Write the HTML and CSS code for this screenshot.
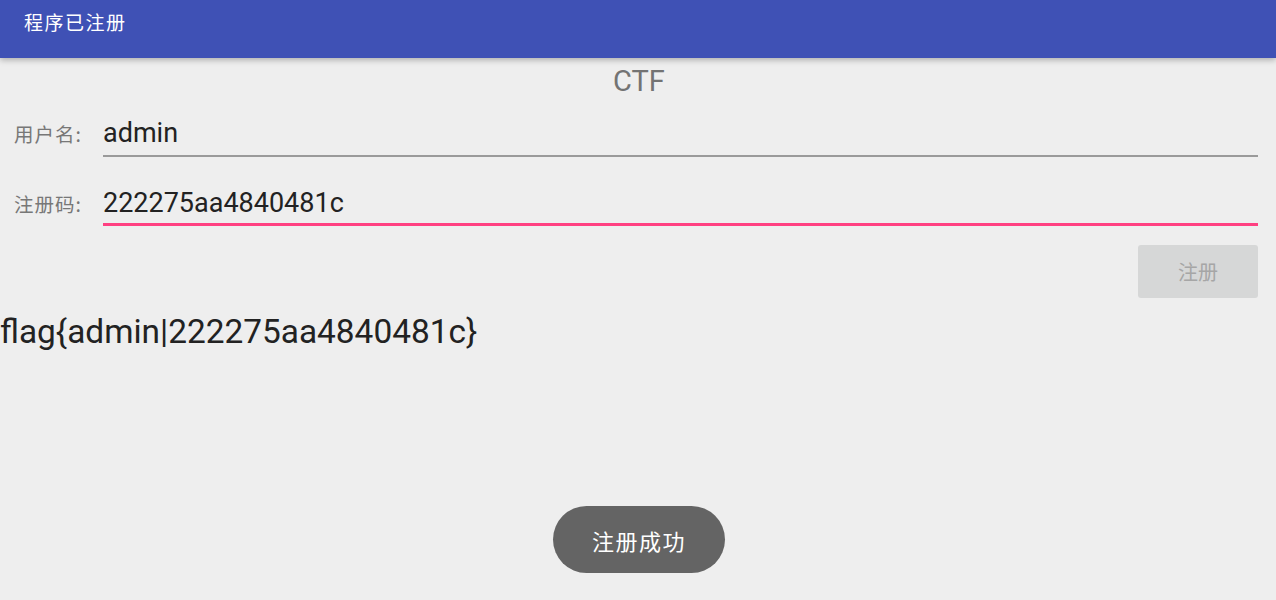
FILE: index.html
```html
<!DOCTYPE html>
<html lang="zh">
<head>
<meta charset="utf-8">
<title>程序已注册</title>
<link rel="stylesheet" href="styles.css">
</head>
<body>
<header class="appbar">
  <h1 class="appbar-title">程序已注册</h1>
</header>
<main class="content">
  <div class="heading">CTF</div>
  <div class="field field-user">
    <span class="field-label">用户名:</span>
    <div class="field-input">admin</div>
  </div>
  <div class="field field-code">
    <span class="field-label">注册码:</span>
    <div class="field-input focused">222275aa4840481c</div>
  </div>
  <div class="actions">
    <button class="btn-register" disabled>注册</button>
  </div>
  <div class="flag">flag{admin|222275aa4840481c}</div>
</main>
<div class="toast">注册成功</div>
</body>
</html>
```

FILE: styles.css
```css
html, body {
  margin: 0;
  padding: 0;
}
body {
  background: #eeeeee;
  font-family: Roboto, "Noto Sans CJK SC", sans-serif;
  width: 1276px;
  height: 600px;
  overflow: hidden;
  position: relative;
}
.appbar {
  height: 58px;
  background: #3f51b5;
  box-shadow: 0 2px 6px rgba(0, 0, 0, 0.28);
  padding: 10px 0 0 24px;
  box-sizing: border-box;
  position: relative;
  z-index: 1;
}
.appbar-title {
  margin: 0;
  font-family: "Noto Sans CJK SC", sans-serif;
  font-weight: 400;
  font-size: 19px;
  line-height: 24px;
  color: #ffffff;
  letter-spacing: 1.5px;
}
.content {
  display: flex;
  flex-direction: column;
}
.heading {
  margin-top: 6px;
  text-align: center;
  font-size: 29px;
  line-height: 34px;
  color: #737373;
  padding-left: 2px;
}
.field {
  display: flex;
  align-items: baseline;
  padding: 0 18px 0 14px;
}
.field-user {
  margin-top: 19px;
}
.field-code {
  margin-top: 30px;
}
.field-label {
  width: 89px;
  flex: none;
  font-family: "Noto Sans CJK SC", sans-serif;
  font-size: 19.5px;
  letter-spacing: 1px;
  color: #777777;
}
.field-input {
  flex: 1;
  font-family: Roboto, sans-serif;
  font-size: 27px;
  line-height: 32px;
  color: #222222;
  padding-bottom: 6px;
  border-bottom: 2px solid #9a9a9a;
}
.field-input.focused {
  padding-bottom: 4px;
  border-bottom: 3px solid #ff4081;
}
.actions {
  display: flex;
  justify-content: flex-end;
  padding-right: 18px;
  margin-top: 19px;
}
.btn-register {
  width: 120px;
  height: 53px;
  border: none;
  border-radius: 3px;
  background: #d6d7d7;
  color: #a6a6a6;
  font-family: "Noto Sans CJK SC", sans-serif;
  font-size: 20px;
  padding: 0;
}
.flag {
  margin-top: 14px;
  font-family: Roboto, sans-serif;
  font-size: 33.4px;
  line-height: 39px;
  color: #222222;
}
.toast {
  position: absolute;
  left: 553px;
  top: 506px;
  width: 172px;
  height: 67px;
  border-radius: 34px;
  background: #646464;
  color: #ffffff;
  font-family: "Noto Sans CJK SC", sans-serif;
  font-size: 22px;
  letter-spacing: 1.5px;
  display: flex;
  align-items: center;
  justify-content: center;
}
```
